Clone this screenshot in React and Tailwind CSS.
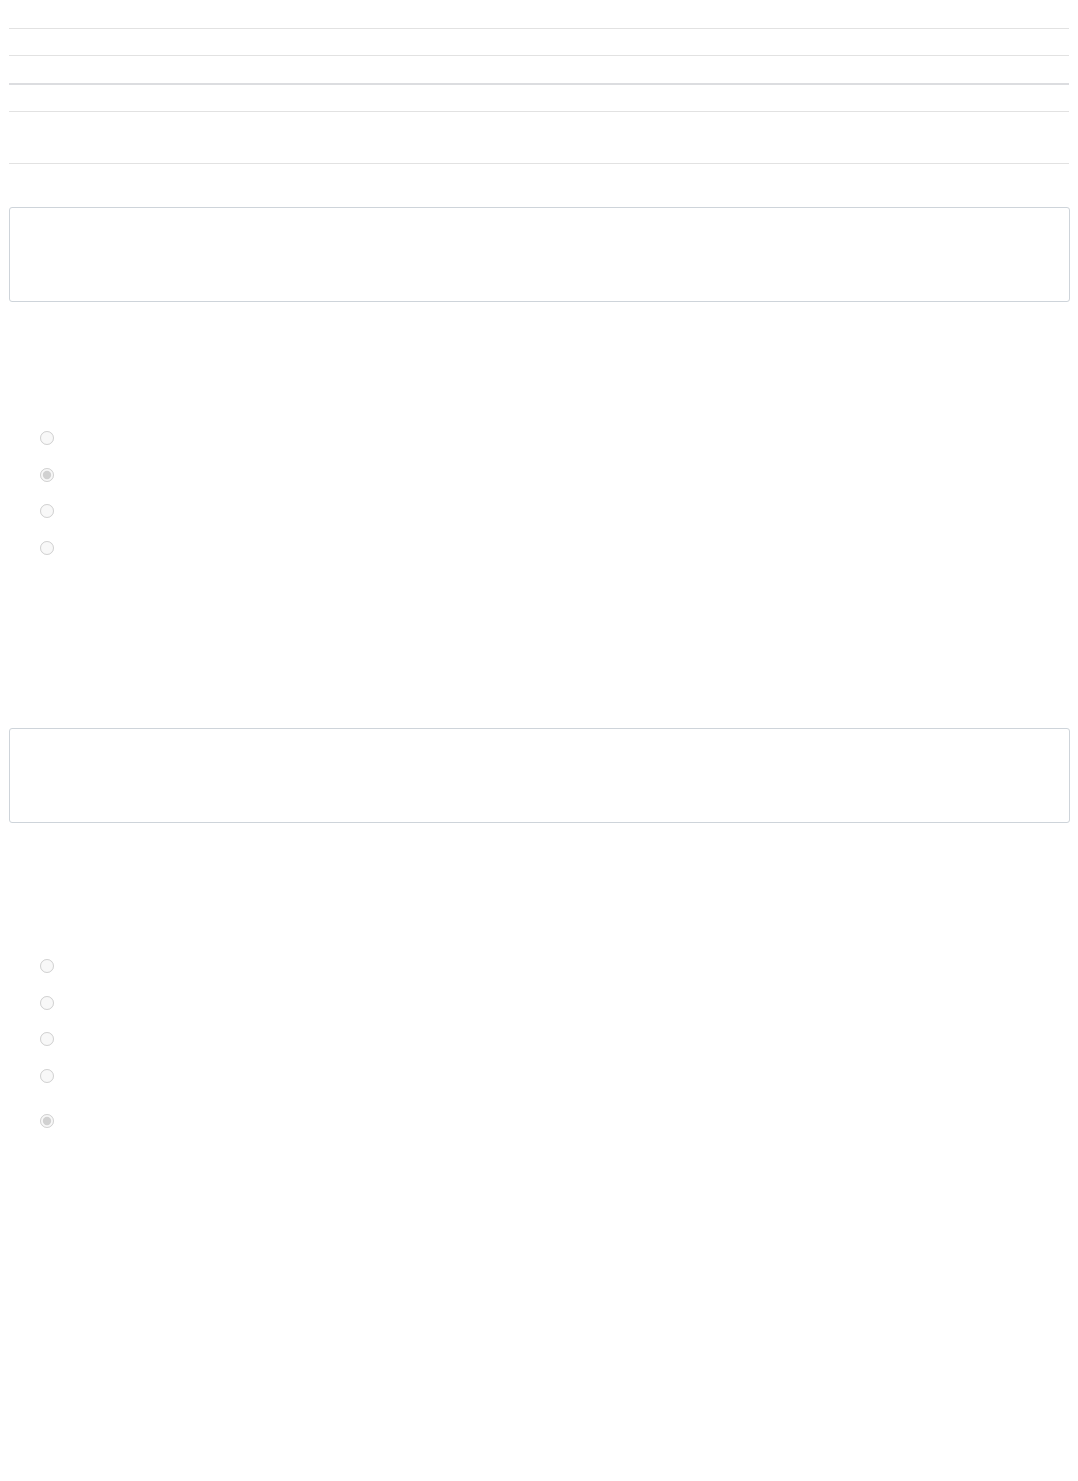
const RadioGroup = ({ count, checked, last }) => (
  <div className="flex flex-col">
    {Array.from({ length: count }).map((_, i) => (
      <label
        key={i}
        className={
          i === count - 1 && last
            ? "flex items-center h-[36.5px] mt-[9px] pl-[31px]"
            : "flex items-center h-[36.5px] pl-[31px]"
        }>
        <input
          type="radio"
          disabled
          defaultChecked={i === checked}
          name={`g${count}`}
          className="m-0 w-[14px] h-[14px]"
        />
      </label>
    ))}
  </div>
);

const App = () => {
  return (
    <div className="min-h-[1481px] bg-white pt-[28px] pl-[9px] pr-[8px] font-['Liberation_Sans',sans-serif]">
      {/* Table lines */}
      <div className="flex flex-col mr-[1px]">
        <div className="h-[27px] border-t border-[#e2e2e2]" />
        <div className="h-[28px] border-t border-[#e2e2e2]" />
        <div className="h-[28px] border-t-2 border-[#dcdde0]" />
        <div className="h-[52px] border-t border-[#e2e2e2]" />
        <div className="border-t border-[#e2e2e2]" />
      </div>

      <textarea
        readOnly
        className="block w-full mt-[43px] h-[95px] border border-[#ced4da] rounded-[3px] resize-none outline-none"
      />

      <div className="mt-[118px]">
        <RadioGroup count={4} checked={1} />
      </div>

      <textarea
        readOnly
        className="block w-full mt-[162px] h-[95px] border border-[#ced4da] rounded-[3px] resize-none outline-none"
      />

      <div className="mt-[125px]">
        <RadioGroup count={5} checked={4} last />
      </div>
    </div>
  );
};

export default App;
